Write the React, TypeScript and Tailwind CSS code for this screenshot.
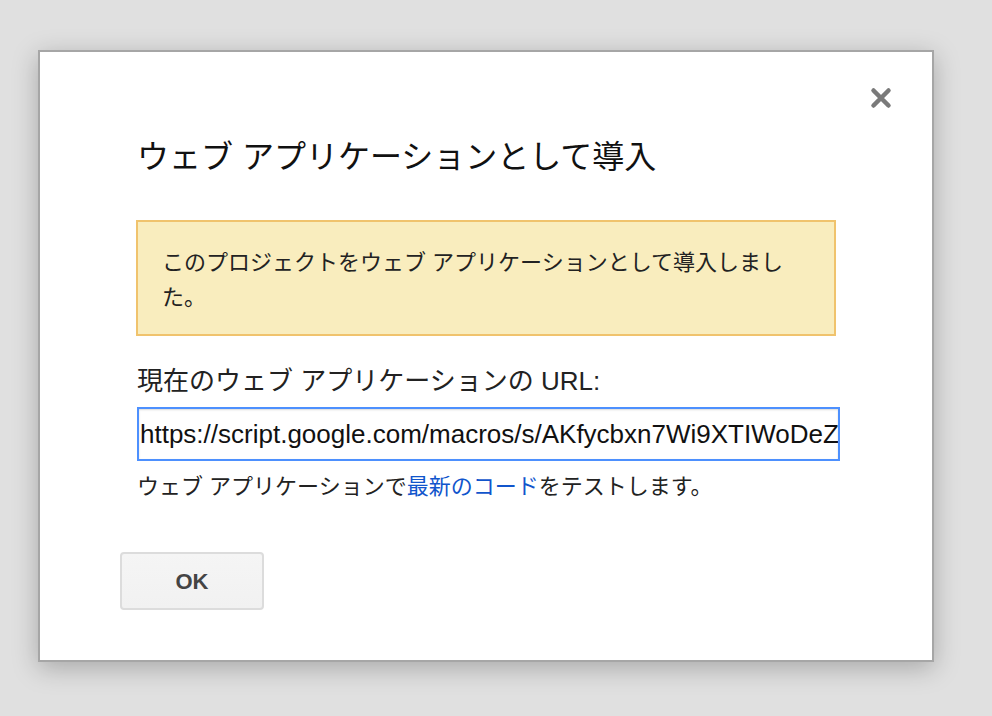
import React from "react";

const jp = { fontFamily: '"Liberation Sans", "Noto Sans CJK JP", sans-serif' };

export default function App() {
  return (
    <div className="w-[992px] h-[716px] bg-[#e0e0e0] pl-[38px] pt-[50px] overflow-hidden" style={jp}>
      <div className="relative w-[896px] h-[612px] bg-white border-2 border-[#a6a6a6] shadow-[0_6px_24px_rgba(0,0,0,0.25)]">
        <button className="absolute left-[828px] top-[33px] w-[26px] h-[26px] flex items-center justify-center">
          <svg width="22" height="22" viewBox="0 0 22 22" className="blur-[0.6px]">
            <path d="M3.5 3.5 L18.5 18.5 M18.5 3.5 L3.5 18.5" stroke="#7a7a7a" strokeWidth="4.5" strokeLinecap="round" />
          </svg>
        </button>
        <div className="pl-[97px] pr-[96px] pt-[85px]">
          <h1 className="text-[32px] leading-[40px] font-normal text-[#111]">
            ウェブ アプリケーションとして導入
          </h1>
          <div className="mt-[43px] w-[700px] -ml-[1px] bg-[#f9edbe] border-2 border-[#f0c36d] pl-[24px] pr-[30px] pt-[23px] pb-[19px] text-[22px] leading-[35px] text-[#222]">
            このプロジェクトをウェブ アプリケーションとして導入しまし
            <br />
            た。
          </div>
          <div className="mt-[28px] text-[26px] leading-[34px] text-[#222]">
            現在のウェブ アプリケーションの URL:
          </div>
          <div className="mt-[9px] w-[703px] h-[54px] border-2 border-[#4d90fe] shadow-[inset_0_1px_2px_rgba(0,0,0,0.15)] overflow-hidden flex items-center pl-[1px]">
            <span className="whitespace-nowrap text-[26px] text-[#111]" style={{ fontFamily: '"Liberation Sans", Arial, sans-serif' }}>
              https://script.google.com/macros/s/AKfycbxn7Wi9XTIWoDeZ7abcdefg
            </span>
          </div>
          <div className="mt-[11px] text-[22px] leading-[30px] text-[#222]">
            ウェブ アプリケーションで<a className="text-[#1155cc]">最新のコード</a>をテストします。
          </div>
        </div>
        <div className="pl-[80px] mt-[50px]">
          <button className="w-[144px] h-[58px] rounded-[4px] border-2 border-[#dcdcdc] bg-[linear-gradient(#f5f5f5,#f1f1f1)] text-[22px] font-bold text-[#444]" style={{ fontFamily: '"Liberation Sans", Arial, sans-serif' }}>
            OK
          </button>
        </div>
      </div>
    </div>
  );
}
